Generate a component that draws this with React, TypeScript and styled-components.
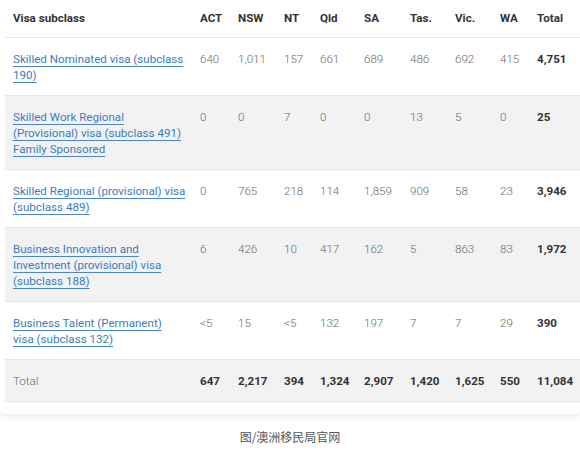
import React from "react";
import styled, { createGlobalStyle } from "styled-components";

const Global = createGlobalStyle`
  html, body { margin: 0; padding: 0; background: #fff; overflow: hidden; }
  body { font-family: Roboto, "Noto Sans", "Noto Sans CJK SC", sans-serif; }
`;

const Page = styled.div`
  width: 580px;
  height: 454px;
  overflow: hidden;
  display: flex;
  flex-direction: column;
`;

const Card = styled.div`
  width: 580px;
  padding: 0 0 12px 5px;
  background: #fff;
  border-radius: 0 0 6px 6px;
  box-shadow: 0 3px 6px rgba(0, 0, 0, 0.08);
  box-sizing: border-box;
`;

const Table = styled.table`
  width: 575px;
  border-collapse: collapse;
  table-layout: fixed;
  font-size: 11.6px;
  line-height: 16px;
`;

const Row = styled.tr<{ $shade?: boolean }>`
  background: ${(p) => (p.$shade ? "#f2f2f3" : "#fff")};
  border-bottom: 1px solid #e6e6e8;
`;

const Th = styled.th`
  text-align: left;
  font-weight: 700;
  color: #333;
  padding: 10px 0 11px 8px;
  vertical-align: middle;
`;

const Td = styled.td<{ $bold?: boolean }>`
  text-align: left;
  vertical-align: top;
  padding: 13px 0 12px 8px;
  color: ${(p) => (p.$bold ? "#333" : "#6a6a6a")};
  font-weight: ${(p) => (p.$bold ? 700 : 300)};
`;

const NameCell = styled(Td)`
  padding-right: 4px;
  font-weight: 400;
  white-space: pre-line;
`;

const Link = styled.a`
  color: #3b7cc2;
  text-decoration: underline;
  text-decoration-color: #4a86c8;
  text-underline-offset: 3px;
  text-decoration-thickness: 1px;
`;

const Caption = styled.div`
  margin-top: 14px;
  text-align: center;
  font-size: 12px;
  color: #555;
  font-family: "Noto Sans CJK SC", sans-serif;
`;

const widths = [187, 38, 46, 36, 44, 46, 45, 45, 37, 51];
const heads = ["Visa subclass", "ACT", "NSW", "NT", "Qld", "SA", "Tas.", "Vic.", "WA", "Total"];

const rows: { name: string; vals: string[] }[] = [
  { name: "Skilled Nominated visa (subclass 190)", vals: ["640", "1,011", "157", "661", "689", "486", "692", "415", "4,751"] },
  { name: "Skilled Work Regional (Provisional) visa (subclass 491) Family Sponsored", vals: ["0", "0", "7", "0", "0", "13", "5", "0", "25"] },
  { name: "Skilled Regional (provisional) visa (subclass 489)", vals: ["0", "765", "218", "114", "1,859", "909", "58", "23", "3,946"] },
  { name: "Business Innovation and Investment (provisional) visa (subclass 188)", vals: ["6", "426", "10", "417", "162", "5", "863", "83", "1,972"] },
  { name: "Business Talent (Permanent)\nvisa (subclass 132)", vals: ["<5", "15", "<5", "132", "197", "7", "7", "29", "390"] },
];

const totals = ["647", "2,217", "394", "1,324", "2,907", "1,420", "1,625", "550", "11,084"];

export default function App() {
  return (
    <Page>
      <Global />
      <Card>
        <Table>
          <colgroup>
            {widths.map((w, i) => (
              <col key={i} style={{ width: w }} />
            ))}
          </colgroup>
          <thead>
            <Row>
              {heads.map((h) => (
                <Th key={h}>{h}</Th>
              ))}
            </Row>
          </thead>
          <tbody>
            {rows.map((r, i) => (
              <Row key={r.name} $shade={i % 2 === 1}>
                <NameCell>
                  <Link href="#">{r.name}</Link>
                </NameCell>
                {r.vals.map((v, j) => (
                  <Td key={j} $bold={j === 8}>
                    {v}
                  </Td>
                ))}
              </Row>
            ))}
            <Row $shade>
              <Td>Total</Td>
              {totals.map((v, j) => (
                <Td key={j} $bold>
                  {v}
                </Td>
              ))}
            </Row>
          </tbody>
        </Table>
      </Card>
      <Caption>图/澳洲移民局官网</Caption>
    </Page>
  );
}
